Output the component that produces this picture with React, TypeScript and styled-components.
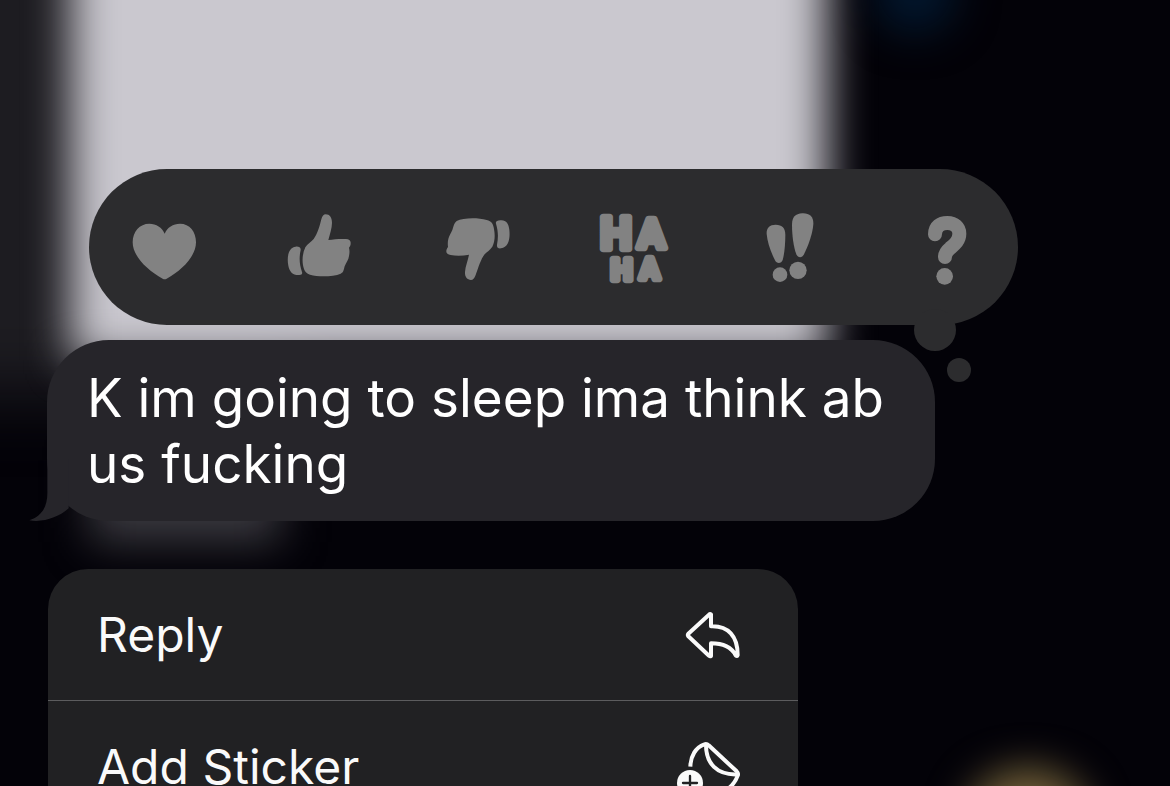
import React from "react";
import styled, { createGlobalStyle } from "styled-components";

const GlobalStyle = createGlobalStyle`
  *, *::before, *::after { box-sizing: border-box; }
  body {
    margin: 0;
    background: #030208;
    font-family: Inter, "Liberation Sans", sans-serif;
  }
`;

const Screen = styled.main`
  position: relative;
  display: flex;
  flex-direction: column;
  align-items: flex-start;
  height: 100vh;
  padding-top: 169px;
  overflow: hidden;
  isolation: isolate;
  background: #030208;
`;

const Backdrop = styled.svg`
  position: absolute;
  inset: 0;
  z-index: -1;
  width: 100%;
  height: 100%;
`;

const Blurred = styled.g<{ $radius: number }>`
  filter: blur(${(p) => p.$radius}px);
`;

const ReactionBar = styled.div`
  position: relative;
  display: flex;
  flex: none;
  align-items: center;
  justify-content: space-between;
  width: calc(100% - 241px);
  max-width: 929px;
  height: 156px;
  margin-left: 89px;
  padding: 0 28px 0 31px;
  border-radius: 78px;
  background: #2c2c2e;
`;

const ThoughtDot = styled.span<{ $size: number; $right: number; $drop: number }>`
  position: absolute;
  right: ${(p) => p.$right}px;
  bottom: -${(p) => p.$drop}px;
  width: ${(p) => p.$size}px;
  height: ${(p) => p.$size}px;
  border-radius: 50%;
  background: #2c2c2e;
`;

const ReactionButton = styled.button`
  z-index: 1;
  width: 88px;
  height: 88px;
  padding: 0;
  border: 0;
  background: none;
  color: #828282;
  cursor: pointer;

  svg {
    display: block;
    width: 88px;
    height: 88px;
    fill: currentColor;
  }
`;

const Laugh = styled.text`
  font-family: Roboto, "Liberation Sans", sans-serif;
  font-weight: 700;
  stroke: currentColor;
  stroke-width: 20px;
  stroke-linejoin: round;
  text-anchor: middle;
`;

const Bubble = styled.article`
  position: relative;
  flex: none;
  width: calc(100% - 282px);
  max-width: 888px;
  margin: 15px 0 0 47px;
  padding: 25px 30px 24px 40px;
  border-radius: 62px;
  background: #26252a;
  color: #fff;
`;

const BubbleText = styled.p`
  margin: 0;
  font-size: 53px;
  line-height: 66px;
`;

const Tail = styled.svg`
  position: absolute;
  left: -20px;
  bottom: 0;
  width: 50px;
  height: 62px;
  fill: #26252a;
`;

const Menu = styled.menu`
  flex: none;
  width: calc(100% - 420px);
  max-width: 750px;
  margin: 48px 0 0 48px;
  padding: 0;
  list-style: none;
  border-radius: 40px;
  overflow: hidden;
  background: #212123;
`;

const MenuEntry = styled.li`
  & + & {
    border-top: 1px solid #5c5c5e;
  }
`;

const MenuButton = styled.button`
  display: flex;
  align-items: center;
  justify-content: space-between;
  width: 100%;
  height: 131px;
  padding: 0 56px 0 49px;
  border: 0;
  background: none;
  color: #fafafa;
  font: inherit;
  font-size: 48px;
  line-height: 64px;
  text-align: left;
  cursor: pointer;

  svg {
    width: 66px;
    height: 66px;
    fill: none;
    stroke: currentColor;
    stroke-width: 12px;
    stroke-linejoin: round;
    stroke-linecap: round;
  }
`;

const reactions = [
  {
    name: "Heart",
    icon: (
      <svg viewBox="30 39 264 264" aria-hidden="true">
        <path d="M164 131C156 112 139 101 118 101C89 101 68 125 68 157C68 198 111 240 158 266Q164 269 170 266C217 240 258 198 258 157C258 125 239 101 210 101C189 101 172 112 164 131Z" />
      </svg>
    ),
  },
  {
    name: "Thumbs up",
    icon: (
      <svg viewBox="499 39 264 264" aria-hidden="true">
        <path d="M648 73C660 73 667 83 667 98C667 114 660 134 656 150C674 147 694 146 709 147C718 147 724 153 723 160C723 166 721 170 718 173C720 181 720 190 718 198C717 209 709 219 705 229C702 240 702 247 693 251C671 260 628 262 601 254C587 250 583 240 580 226C577 207 579 189 587 172C593 162 605 155 612 147C624 131 630 108 635 88C638 78 642 73 648 73Z" />
        <path d="M558 170C568 169 574 173 573 180C568 202 569 223 577 246C579 252 576 255 569 255C549 256 540 246 536 227C531 202 536 172 558 170Z" />
      </svg>
    ),
  },
  {
    name: "Thumbs down",
    icon: (
      <svg viewBox="38 39 264 264" aria-hidden="true">
        <path d="M152 270C140 270 133 260 134 246C135 229 143 211 146 194C127 198 106 198 91 195C82 194 77 189 78 182C79 177 81 174 83 171C82 162 82 155 84 147C86 138 92 129 96 120C100 109 101 99 109 93C128 83 172 82 199 90C214 93 219 102 221 117C225 137 223 156 216 170C209 181 200 185 193 193C181 208 174 234 166 255C162 265 158 270 152 270Z" />
        <path d="M240 91C257 89 265 101 267 119C270 148 264 173 242 175C233 176 229 172 230 164C234 143 234 124 227 101C225 94 230 92 240 91Z" />
      </svg>
    ),
  },
  {
    name: "Ha ha",
    icon: (
      <svg viewBox="508 39 264 264" aria-hidden="true">
        <Laugh>
          <tspan x="589" y="178" fontSize="134">H</tspan>
          <tspan x="695" y="175" fontSize="122">A</tspan>
          <tspan x="606" y="269" fontSize="90">H</tspan>
          <tspan x="690" y="266" fontSize="86">A</tspan>
        </Laugh>
      </svg>
    ),
  },
  {
    name: "Emphasize",
    icon: (
      <svg viewBox="17 39 264 264" aria-hidden="true">
        <path d="M106 104C126 104 135 114 135 134C135 163 132 193 127 210C123 222 109 222 104 211C92 187 81 157 79 132C78 115 87 104 106 104Z" />
        <path d="M186 70C208 69 220 81 219 102C217 132 204 166 191 193C185 205 173 204 168 193C159 169 155 133 155 104C155 82 165 71 186 70Z" />
        <circle cx="119" cy="254" r="22" />
        <circle cx="173" cy="241" r="26" />
      </svg>
    ),
  },
  {
    name: "Question",
    icon: (
      <svg viewBox="486 39 264 264" aria-hidden="true">
        <path
          d="M585 133C585 109 601 99 622 99C644 99 658 112 658 131C658 151 645 162 630 175C619 184 615 191 615 201"
          fill="none"
          stroke="currentColor"
          strokeWidth="42"
          strokeLinecap="round"
          strokeLinejoin="round"
        />
        <circle cx="614" cy="259" r="25" />
      </svg>
    ),
  },
];

const menuItems = [
  {
    label: "Reply",
    icon: (
      <svg viewBox="48 36 198 198" aria-hidden="true">
        <path d="M153 73V109C205 107 233 139 233 195Q232 200 227 196C213 169 189 160 153 160V198Q150 200 147 197L85 139Q82 135 85 131L147 74Q150 71 153 73Z" />
      </svg>
    ),
  },
  {
    label: "Add Sticker",
    icon: (
      <svg viewBox="48 432 198 198" aria-hidden="true">
        <path d="M91 530C92 498 107 472 133 463Q140 460 146 466L230 544Q236 550 233 557C222 590 190 612 150 616" strokeLinecap="butt" />
        <path d="M138 465C138 520 170 556 233 553" />
        <circle cx="90" cy="579" r="39" fill="currentColor" stroke="none" />
        <path d="M69 579H111M90 558V600" stroke="#212123" strokeWidth="7" />
      </svg>
    ),
  },
];

export default function App() {
  return (
    <>
      <GlobalStyle />
      <Screen>
        <Backdrop aria-hidden="true">
          <Blurred $radius={34}>
            <rect x="-200" y="-200" width="500" height="595" fill="#1d1c21" />
          </Blurred>
          <Blurred $radius={22}>
            <rect x="71" y="-120" width="756" height="480" fill="#cac8cf" />
            <rect x="90" y="460" width="190" height="82" fill="#3b3a40" />
          </Blurred>
          <Blurred $radius={20}>
            <circle cx="915" cy="-8" r="42" fill="#02162c" />
            <ellipse cx="1028" cy="825" rx="62" ry="56" fill="#75633a" />
          </Blurred>
        </Backdrop>

        <ReactionBar role="toolbar" aria-label="Reactions">
          {reactions.map((reaction) => (
            <ReactionButton key={reaction.name} type="button" aria-label={reaction.name}>
              {reaction.icon}
            </ReactionButton>
          ))}
          <ThoughtDot $size={42} $right={62} $drop={26} />
          <ThoughtDot $size={24} $right={47} $drop={57} />
        </ReactionBar>

        <Bubble>
          <Tail viewBox="50 387 150 186" aria-hidden="true">
            <path d="M111 387V480C113 530 95 558 57 571C100 578 145 562 175 535V387Z" />
          </Tail>
          <BubbleText>K im going to sleep ima think ab us fucking</BubbleText>
        </Bubble>

        <Menu>
          {menuItems.map((item) => (
            <MenuEntry key={item.label}>
              <MenuButton type="button">
                {item.label}
                {item.icon}
              </MenuButton>
            </MenuEntry>
          ))}
        </Menu>
      </Screen>
    </>
  );
}
